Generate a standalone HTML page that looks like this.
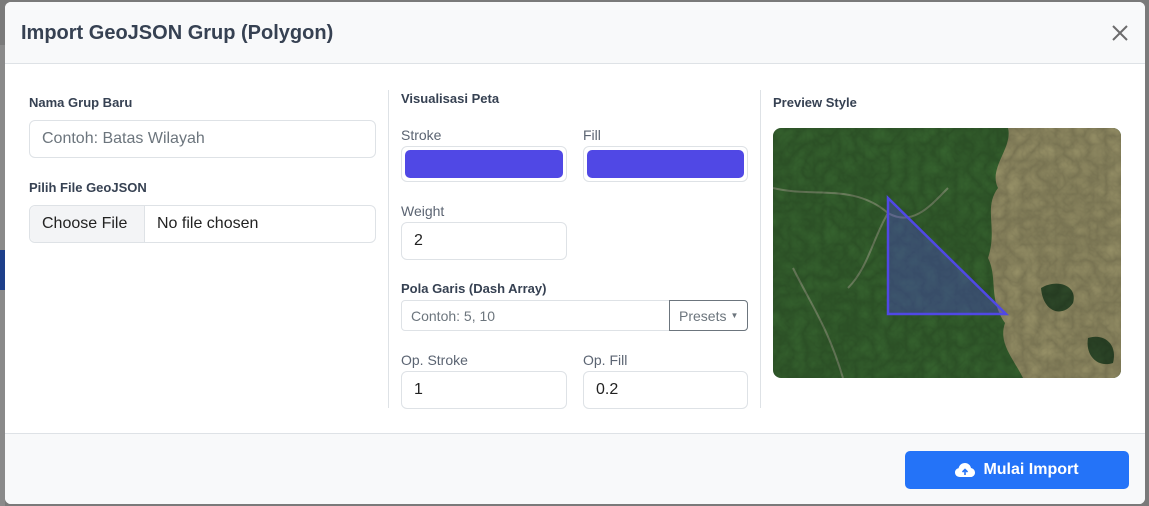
<!DOCTYPE html>
<html><head><style>
*{box-sizing:border-box;margin:0;padding:0}
body{width:1149px;height:506px;background:#7a7a7a;font-family:"Liberation Sans",sans-serif;position:relative;overflow:hidden}
.modal{position:absolute;left:5px;top:2px;width:1140px;height:502px;background:#fff;border-radius:6px;overflow:hidden}
.hdr{height:62px;background:#f8f9fa;border-bottom:1px solid #dee2e6;position:relative}
.hdr h1{position:absolute;left:16px;top:20px;font-size:20px;font-weight:bold;color:#364152}
.x{position:absolute;left:1106px;top:22px}
.ftr{position:absolute;left:0;top:431px;width:100%;height:71px;background:#f8f9fa;border-top:1px solid #dee2e6}
.btn{position:absolute;left:900px;top:17px;width:224px;height:38px;background:#2473f8;border-radius:5px;color:#fff;font-weight:bold;font-size:16px;display:flex;align-items:center;justify-content:center;gap:8px}
.a{position:absolute}
.lb{font-size:13px;font-weight:bold;color:#364152}
.ll{font-size:14px;color:#5b6472}
.in{position:absolute;border:1px solid #dee2e6;border-radius:6px;background:#fff;font-size:16px;color:#222;padding-left:12px;display:flex;align-items:center}
.ph{color:#6c757d}
.vl{position:absolute;width:1px;background:#dee2e6}
.sw{position:absolute;border:1px solid #dee2e6;border-radius:6px;padding:3px}
.sw div{width:100%;height:100%;background:#5048e5;border-radius:5px}
</style></head><body>
<div class="a" style="left:0;top:45px;width:5px;height:461px;background:#8a8a8a"></div>
<div class="a" style="left:0;top:250px;width:5px;height:40px;background:#1e3f8a"></div>
<div class="modal">
<div class="hdr"><h1>Import GeoJSON Grup (Polygon)</h1>
<svg class="x" width="18" height="18" viewBox="0 0 18 18"><path d="M2 2L16 16M16 2L2 16" stroke="#6c6c6c" stroke-width="2"/></svg></div>

<div class="a lb" style="left:24px;top:93px">Nama Grup Baru</div>
<div class="in" style="left:24px;top:118px;width:347px;height:38px"><span class="ph">Contoh: Batas Wilayah</span></div>
<div class="a lb" style="left:24px;top:178px">Pilih File GeoJSON</div>
<div class="in" style="left:24px;top:203px;width:347px;height:38px;padding:0">
<div style="width:115px;height:100%;background:#f3f4f6;border-right:1px solid #dee2e6;display:flex;align-items:center;padding-left:12px;border-radius:6px 0 0 6px">Choose File</div>
<span style="padding-left:12px">No file chosen</span></div>

<div class="vl" style="left:383px;top:88px;height:318px"></div>
<div class="vl" style="left:755px;top:88px;height:318px"></div>

<div class="a lb" style="left:396px;top:89px">Visualisasi Peta</div>
<div class="a ll" style="left:396px;top:125px">Stroke</div>
<div class="a ll" style="left:578px;top:125px">Fill</div>
<div class="sw" style="left:396px;top:144px;width:166px;height:36px"><div></div></div>
<div class="sw" style="left:578px;top:144px;width:165px;height:36px"><div></div></div>
<div class="a ll" style="left:396px;top:201px">Weight</div>
<div class="in" style="left:396px;top:220px;width:166px;height:38px">2</div>
<div class="a lb" style="left:396px;top:279px">Pola Garis (Dash Array)</div>
<div class="in" style="left:396px;top:298px;width:347px;height:31px;font-size:14px;padding-left:9px;border-radius:4px"><span class="ph">Contoh: 5, 10</span></div>
<div class="a" style="left:664px;top:298px;width:79px;height:31px;border:1px solid #6c757d;border-radius:0 4px 4px 0;background:#fff;font-size:14px;color:#6c757d;display:flex;align-items:center;padding-left:9px">Presets <span style="font-size:8px;margin-left:4px">▼</span></div>
<div class="a ll" style="left:396px;top:350px">Op. Stroke</div>
<div class="a ll" style="left:578px;top:350px">Op. Fill</div>
<div class="in" style="left:396px;top:369px;width:166px;height:38px">1</div>
<div class="in" style="left:578px;top:369px;width:165px;height:38px">0.2</div>

<div class="a lb" style="left:768px;top:93px">Preview Style</div>
<svg class="a" style="left:768px;top:126px;border-radius:8px" width="348" height="250" viewBox="0 0 348 250">
<defs><filter id="n"><feTurbulence baseFrequency="0.06" numOctaves="3" seed="4"/><feColorMatrix type="matrix" values="0 0 0 0 0  0 0 0 0 0  0 0 0 0 0  0 0 0 -1.2 1"/></filter></defs>
<rect width="348" height="250" fill="#36632f"/>
<path d="M235 0H348V250H250C240 230 225 215 232 195C215 170 225 150 215 130C225 100 210 80 225 60C215 40 240 20 235 0Z" fill="#958f66"/>
<path d="M268 160C285 150 305 158 300 175C290 190 270 185 268 160Z" fill="#2f4a2a"/>
<path d="M315 210C330 205 345 215 340 235C325 240 312 228 315 210Z" fill="#2f4a2a"/>
<path d="M0 60C40 70 80 55 115 85C140 100 160 75 175 60M20 140C40 180 55 200 70 250M115 85C100 110 95 140 75 160" stroke="#8a9478" stroke-width="2" fill="none" opacity=".7"/>
<rect width="348" height="250" fill="#000" filter="url(#n)" opacity=".2"/>
<path d="M115 70L115 186L233 186Z" fill="#5048e5" fill-opacity=".35" stroke="#5048e5" stroke-width="2.5"/>
</svg>

<div class="ftr"><div class="btn"><svg width="20" height="16" viewBox="0 0 20 16"><path d="M5 15C2 15 0 13 0 10.5C0 8.3 1.6 6.6 3.6 6.3C4.2 3 7 1 10 1C13 1 15.5 3.2 16 6C18.3 6.4 20 8.3 20 10.7C20 13 18 15 15.5 15Z" fill="#fff"/><path d="M10 13V7.5M7.5 10L10 7.5L12.5 10" stroke="#2473f8" stroke-width="1.6" fill="none"/></svg>Mulai Import</div></div>
</div>
</body></html>
